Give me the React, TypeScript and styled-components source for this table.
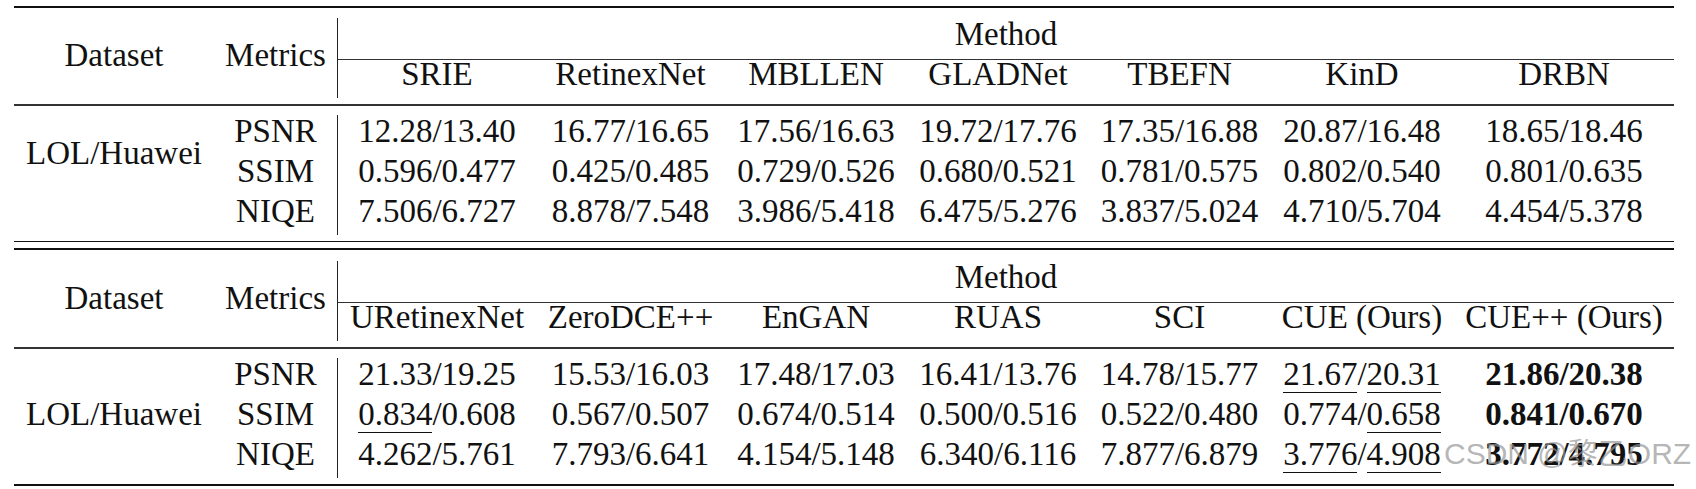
import styled, { createGlobalStyle } from 'styled-components';

const GlobalStyle = createGlobalStyle`
  html,
  body {
    margin: 0;
    padding: 0;
    background: #fff;
  }
`;

const StPage = styled.div`
  position: relative;
  width: 1696px;
  height: 489px;
  padding: 6px 0 0 14px;
  box-sizing: border-box;
  overflow: hidden;

  font-family: 'Liberation Serif', 'Times New Roman', serif;
  font-size: 33px;
  color: #111;
`;

const StTable = styled.table`
  width: 1660px;
  table-layout: fixed;
  border-collapse: separate;
  border-spacing: 0;
`;

const StRule = styled.tr<{ $h: number; $color?: string }>`
  height: ${(p) => p.$h}px;
  & > td {
    padding: 0;
    font-size: 0;
    line-height: 0;
    background: ${(p) => p.$color ?? '#111'};
  }
`;

const StGap = styled.tr<{ $h: number }>`
  height: ${(p) => p.$h}px;
  & > td {
    padding: 0;
    font-size: 0;
    line-height: 0;
  }
`;

const StHeadRow = styled.tr<{ $h: number }>`
  height: ${(p) => p.$h}px;
`;

const StBodyRow = styled.tr`
  height: 40px;
`;

const StCell = styled.td`
  padding: 0;
  vertical-align: top;
  text-align: center;
  white-space: nowrap;
  line-height: 33px;
`;

const StHeadLabel = styled(StCell)<{ $rule?: boolean }>`
  padding-top: 21px;
  border-right: ${(p) => (p.$rule ? '1px solid #222' : 'none')};
`;

const StMethodCell = styled(StCell)`
  border-bottom: 1px solid #333;
`;

const StMethodName = styled(StCell)`
  line-height: 28px;
`;

const StDatasetCell = styled(StCell)<{ $offset: number }>`
  padding-top: ${(p) => p.$offset}px;
`;

const StMetricCell = styled(StCell)`
  border-right: 1px solid #222;
`;

const StValue = styled(StCell)<{ $bold?: boolean }>`
  font-weight: ${(p) => (p.$bold ? 700 : 400)};
`;

const StUnder = styled.span`
  border-bottom: 1px solid #111;
`;

const StWatermark = styled.div`
  position: absolute;
  top: 439px;
  left: 1444px;

  font-family: 'Liberation Sans', 'Noto Sans CJK SC', sans-serif;
  font-size: 30px;
  line-height: 30px;
  white-space: nowrap;
  color: rgba(150, 150, 150, 0.7);
`;

interface Section {
  methods: string[];
  rows: { metric: string; values: string[] }[];
  topGap: number;
  bottomRule: number;
  datasetOffset: number;
  bestColumn?: number;
}

const sections: Section[] = [
  {
    methods: ['SRIE', 'RetinexNet', 'MBLLEN', 'GLADNet', 'TBEFN', 'KinD', 'DRBN'],
    rows: [
      {
        metric: 'PSNR',
        values: ['12.28/13.40', '16.77/16.65', '17.56/16.63', '19.72/17.76', '17.35/16.88', '20.87/16.48', '18.65/18.46'],
      },
      {
        metric: 'SSIM',
        values: ['0.596/0.477', '0.425/0.485', '0.729/0.526', '0.680/0.521', '0.781/0.575', '0.802/0.540', '0.801/0.635'],
      },
      {
        metric: 'NIQE',
        values: ['7.506/6.727', '8.878/7.548', '3.986/5.418', '6.475/5.276', '3.837/5.024', '4.710/5.704', '4.454/5.378'],
      },
    ],
    topGap: 10,
    bottomRule: 1,
    datasetOffset: 22,
  },
  {
    methods: ['URetinexNet', 'ZeroDCE++', 'EnGAN', 'RUAS', 'SCI', 'CUE (Ours)', 'CUE++ (Ours)'],
    rows: [
      {
        metric: 'PSNR',
        values: ['21.33/19.25', '15.53/16.03', '17.48/17.03', '16.41/13.76', '14.78/15.77', '_21.67/_20.31', '21.86/20.38'],
      },
      {
        metric: 'SSIM',
        values: ['_0.834/0.608', '0.567/0.507', '0.674/0.514', '0.500/0.516', '0.522/0.480', '0.774/_0.658', '0.841/0.670'],
      },
      {
        metric: 'NIQE',
        values: ['4.262/5.761', '7.793/6.641', '4.154/5.148', '6.340/6.116', '7.877/6.879', '_3.776/_4.908', '3.772/4.795'],
      },
    ],
    topGap: 11,
    bottomRule: 2,
    datasetOffset: 40,
    bestColumn: 6,
  },
];

// column widths: dataset, metrics, then the seven methods
const widths = [200, 124, 198, 189, 182, 182, 181, 184, 220];

// "_x" marks a second-best number (underlined)
function Pair({ text }: { text: string }) {
  const parts = text.split('/');
  return (
    <>
      {parts.map((part, i) => (
        <span key={part + i}>
          {i > 0 && '/'}
          {part.startsWith('_') ? <StUnder>{part.slice(1)}</StUnder> : part}
        </span>
      ))}
    </>
  );
}

function TableSection({ section, last }: { section: Section; last: boolean }) {
  const { methods, rows, topGap, bottomRule, datasetOffset, bestColumn } = section;
  return (
    <>
      <StRule $h={2}>
        <td colSpan={9} />
      </StRule>
      <StGap $h={topGap}>
        <td colSpan={9} />
      </StGap>
      <StHeadRow $h={42}>
        <StHeadLabel rowSpan={2}>Dataset</StHeadLabel>
        <StHeadLabel rowSpan={2} $rule>
          Metrics
        </StHeadLabel>
        <StMethodCell colSpan={7}>Method</StMethodCell>
      </StHeadRow>
      <StHeadRow $h={38}>
        {methods.map((m) => (
          <StMethodName key={m}>{m}</StMethodName>
        ))}
      </StHeadRow>
      <StGap $h={6}>
        <td colSpan={9} />
      </StGap>
      <StRule $h={2} $color="#333">
        <td colSpan={9} />
      </StRule>
      <StGap $h={9}>
        <td colSpan={9} />
      </StGap>
      {rows.map((row, r) => (
        <StBodyRow key={row.metric}>
          {r === 0 && (
            <StDatasetCell rowSpan={3} $offset={datasetOffset}>
              LOL/Huawei
            </StDatasetCell>
          )}
          <StMetricCell>{row.metric}</StMetricCell>
          {row.values.map((v, c) => (
            <StValue key={c} $bold={c === bestColumn}>
              <Pair text={v} />
            </StValue>
          ))}
        </StBodyRow>
      ))}
      <StGap $h={6}>
        <td colSpan={9} />
      </StGap>
      <StRule $h={bottomRule}>
        <td colSpan={9} />
      </StRule>
      {!last && (
        <StGap $h={6}>
          <td colSpan={9} />
        </StGap>
      )}
    </>
  );
}

function App() {
  return (
    <StPage>
      <GlobalStyle />
      <StTable>
        <colgroup>
          {widths.map((w, i) => (
            <col key={i} style={{ width: `${w}px` }} />
          ))}
        </colgroup>
        <tbody>
          {sections.map((s, i) => (
            <TableSection key={i} section={s} last={i === sections.length - 1} />
          ))}
        </tbody>
      </StTable>
      <StWatermark>CSDN @黎乙ORZ</StWatermark>
    </StPage>
  );
}

export default App;
